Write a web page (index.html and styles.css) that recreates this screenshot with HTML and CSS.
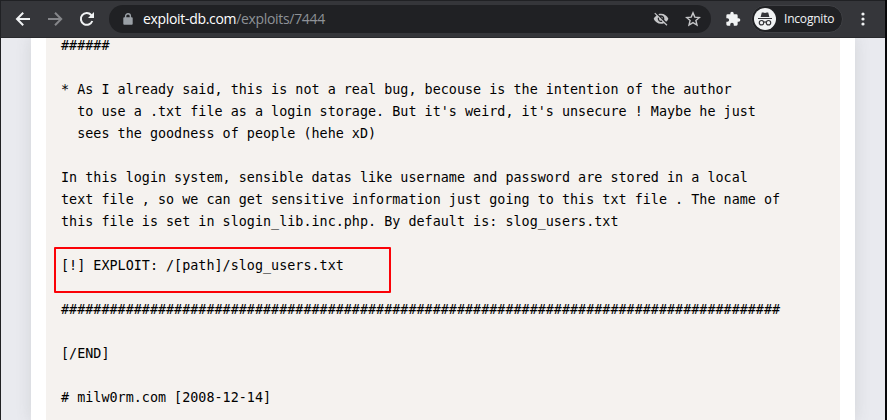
FILE: index.html
```
<!DOCTYPE html>
<html lang="en">
<head>
<meta charset="utf-8">
<title>exploit-db.com/exploits/7444</title>
<link rel="stylesheet" href="styles.css">
</head>
<body>
<div class="window">
  <header class="toolbar">
    <nav class="nav">
      <svg width="16" height="16" viewBox="0 0 16 16"><path class="line" d="M15 8H2.4M8.2 1.8L2 8l6.2 6.2"/></svg>
      <svg class="dim" width="16" height="16" viewBox="0 0 16 16"><path class="line" d="M1 8h12.600M8 1.800L14.200 8 8 14.200"/></svg>
      <svg width="16" height="16" viewBox="0 0 16 16"><path class="line" d="M13.300 10A5.900 5.900 0 1 1 12.200 4L14 5.800"/><path class="fill" d="M15 1v6H9z"/></svg>
    </nav>
    <div class="address">
      <svg class="lock" width="10" height="12" viewBox="0 0 10 12"><path class="fill" d="M1.2 4.300h7.600q.9 0 .9.900v5.600q0 .9-.9.900H1.200q-.9 0-.9-.9V5.200q0-.9.9-.9z"/><path class="shackle" d="M2.600 5V3.100a2.400 2.400 0 0 1 4.800 0V5"/></svg>
      <span class="url">exploit-db.com<span class="path">/exploits/7444</span></span>
      <svg class="soft" width="16" height="16" viewBox="0 0 24 24"><path class="fill" d="M12 6.500c2.800 0 5 2.200 5 5 0 .6-.1 1.200-.3 1.800l3 3c1.500-1.300 2.700-2.900 3.400-4.800C21.300 7.100 17 4 12 4c-1.400 0-2.700.2-4 .7l2.200 2.100c.5-.2 1.100-.3 1.800-.3zM2 3.800l2.700 2.700.5.500C3.300 8.200 1.800 9.700 1 11.500 2.700 15.900 7 19 12 19c1.500 0 3-.3 4.400-.8l.4.400 3.500 3.400 1.300-1.300L3.300 2.500zM7.500 9.300l1.600 1.600c-.1.200-.1.400-.1.600a3 3 0 0 0 3.700 2.900l1.500 1.600A5 5 0 0 1 7.500 9.300zm4.300-.8 3.200 3.200v-.2a3 3 0 0 0-3.200-3z"/></svg>
      <svg class="soft" width="16" height="16" viewBox="0 0 16 16"><path class="star" d="M8 1.900l1.800 4.200 4.600.4-3.500 3 1.100 4.500L8 11.600 4 14l1.100-4.500-3.500-3 4.600-.4z"/></svg>
    </div>
    <svg class="puzzle" width="16" height="16" viewBox="0 0 24 24"><path class="fill" d="M20.500 11H19V7a2 2 0 0 0-2-2h-4V3.500a2.500 2.500 0 0 0-5 0V5H4a2 2 0 0 0-2 2v3.800h1.500a2.700 2.700 0 0 1 0 5.400H2V20a2 2 0 0 0 2 2h3.800v-1.500a2.700 2.700 0 0 1 5.400 0V22H17a2 2 0 0 0 2-2v-4h1.500a2.500 2.500 0 0 0 0-5z"/></svg>
    <div class="profile">
      <svg width="22" height="22" viewBox="0 0 22 22"><circle class="fill" cx="11" cy="11" r="11"/><path class="ink" d="M7.800 4.500h1.500l1.700.5 1.700-.5h1.500L15.400 9H6.600z"/><path class="glasses" d="M4 10.500h14M9.700 14.200q1.300-.8 2.600 0"/><circle class="glasses" cx="7.500" cy="14.700" r="2.200"/><circle class="glasses" cx="14.500" cy="14.700" r="2.200"/></svg>
      <span class="profile-name">Incognito</span>
    </div>
    <svg class="menu" width="4" height="14" viewBox="0 0 4 14"><circle class="fill" cx="2" cy="2" r="1.600"/><circle class="fill" cx="2" cy="7" r="1.600"/><circle class="fill" cx="2" cy="12" r="1.600"/></svg>
  </header>
  <main class="page">
    <div class="card">
<pre class="code">######

* As I already said, this is not a real bug, becouse is the intention of the author
  to use a .txt file as a login storage. But it's weird, it's unsecure ! Maybe he just
  sees the goodness of people (hehe xD)

In this login system, sensible datas like username and password are stored in a local
text file , so we can get sensitive information just going to this txt file . The name of
this file is set in slogin_lib.inc.php. By default is: slog_users.txt

<span class="marked">[!] EXPLOIT: /[path]/slog_users.txt</span>

#########################################################################################

[/END]

# milw0rm.com [2008-12-14]</pre>
    </div>
  </main>
</div>
</body>
</html>
```
FILE: styles.css
```
* { box-sizing: border-box; }
body { margin: 0; background: #0c0c0e; }
svg { display: block; flex: none; color: #f1f3f4; }
.fill { fill: currentColor; }
.line { fill: none; stroke: currentColor; stroke-width: 2; }
.window {
  width: 887px;
  height: 420px;
  overflow: hidden;
  display: flex;
  flex-direction: column;
  border-left: 1px solid #202124;
  border-right: 2px solid #08080a;
}
.toolbar {
  height: 38px;
  flex: none;
  display: flex;
  align-items: center;
  background: #35363a;
  border-top: 1px solid #202124;
  border-bottom: 1px solid #292a2d;
  font-family: "Open Sans", "Noto Sans", sans-serif;
}
.nav { display: flex; gap: 16px; margin-left: 14px; }
.nav .dim { color: #85868a; }
.address {
  width: 602px;
  height: 28px;
  margin-left: 14px;
  padding: 0 10px 0 14px;
  border-radius: 14px;
  background: #202124;
  display: flex;
  align-items: center;
}
.address .lock { color: #9aa0a6; }
.shackle { fill: none; stroke: currentColor; stroke-width: 1.4; }
.url {
  margin-left: 10px;
  margin-right: auto;
  font-size: 14px;
  letter-spacing: -0.32px;
  line-height: 28px;
  white-space: nowrap;
  color: #fff;
}
.path { color: #8e9297; }
.address .soft { color: #c5c6c8; }
.soft + .soft { margin-left: 16px; }
.star { fill: none; stroke: currentColor; stroke-width: 1.4; }
.puzzle { margin-left: 14px; }
.profile {
  width: 92px;
  height: 28px;
  margin-left: 10px;
  padding-left: 2px;
  border: 1px solid #404145;
  border-radius: 14px;
  background: #202124;
  display: flex;
  align-items: center;
}
.ink { fill: #35363a; }
.glasses { fill: none; stroke: #35363a; stroke-width: 1.2; }
.profile-name {
  margin-left: 8px;
  font-size: 12px;
  letter-spacing: -0.2px;
  line-height: 22px;
  margin-top: -1px;
  color: #f1f3f4;
}
.menu { margin-left: 18px; }
.page {
  flex: 1;
  min-height: 0;
  padding: 0 30px;
  background: #e9eaef;
}
.card {
  height: 382px;
  padding: 0 15px;
  background: #fff;
  box-shadow: 0 0 15px rgba(69, 80, 80, 0.14);
  clip-path: inset(0 -30px);
}
.code {
  height: 382px;
  margin: 0;
  padding: 0 15px;
  overflow: hidden;
  background: #f5f2ef;
  color: #000;
  font-family: "DejaVu Sans Mono", monospace;
  font-size: 13.4px;
  letter-spacing: 0.018px;
  line-height: 22px;
}
.code::before { content: ""; display: block; margin-top: -3px; }
.marked { position: relative; }
.marked::after {
  content: "";
  position: absolute;
  box-sizing: border-box;
  left: -7px;
  top: -11px;
  width: 337px;
  height: 46px;
  border: 2px solid #fb0207;
  border-radius: 1px;
}
```
